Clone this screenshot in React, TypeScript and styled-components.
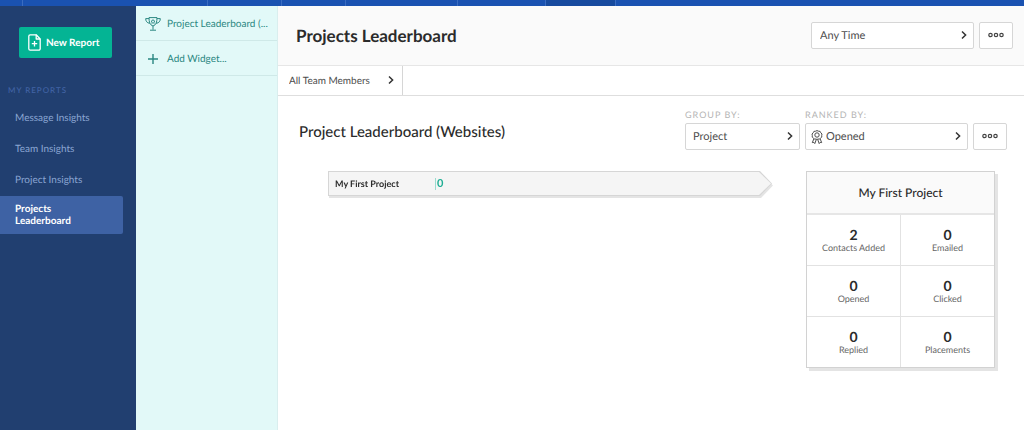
import React from "react";
import styled, { createGlobalStyle } from "styled-components";

const GlobalStyle = createGlobalStyle`
  *, *::before, *::after { box-sizing: border-box; }
  body {
    margin: 0;
    background: #fff;
    color: #2b2b2b;
    font-family: Lato, "Liberation Sans", sans-serif;
    font-size: 12px;
    line-height: 16px;
    text-rendering: geometricPrecision;
  }
  h1, h2, h3, p, ul, dl, dd { margin: 0; padding: 0; }
  ul { list-style: none; }
  button, select { font: inherit; color: inherit; text-rendering: inherit; }
`;

const Page = styled.div`
  display: flex;
  flex-direction: column;
  min-height: 100vh;
`;

const TopBar = styled.div`
  display: flex;
  height: 6px;
  background: #1a52b1;
`;

const TopBarSlot = styled.div<{ $width: number; $active?: boolean }>`
  width: ${(p) => p.$width}px;
  border-right: 1px solid #3a6cc0;
  background: ${(p) => (p.$active ? "#174a9e" : "transparent")};
`;

const Columns = styled.div`
  display: flex;
  flex: 1;
`;

const Sidebar = styled.nav`
  flex: 0 0 136px;
  min-width: 0;
  background: #213f70;
`;

const NewReportButton = styled.button`
  display: flex;
  align-items: center;
  gap: 5px;
  width: 93px;
  height: 31px;
  margin: 21px 0 0 19px;
  padding: 0 0 0 9px;
  border: 0;
  border-radius: 2px;
  background: #04b494;
  color: #fff;
  font-size: 10px;
  font-weight: 700;
  white-space: nowrap;
`;

const SidebarHeading = styled.h2`
  margin: 25px 0 5px 8px;
  color: #4264a6;
  font-size: 8px;
  font-weight: 500;
  letter-spacing: 1px;
  line-height: 14px;
  text-transform: uppercase;
`;

const ReportLink = styled.a<{ $active?: boolean }>`
  display: block;
  margin-right: 13px;
  margin-top: ${(p) => (p.$active ? "1px" : "0")};
  padding: ${(p) => (p.$active ? "7px 40px 7px 15px" : "10px 15px 9px")};
  border-radius: 0 2px 2px 0;
  background: ${(p) => (p.$active ? "#3e62a4" : "transparent")};
  color: ${(p) => (p.$active ? "#fff" : "#8ba6d3")};
  font-size: 10px;
  font-weight: ${(p) => (p.$active ? 700 : 400)};
  line-height: 12px;
  text-decoration: none;
`;

const WidgetPanel = styled.aside`
  flex: 0 0 142px;
  min-width: 0;
  border-right: 1px solid #d9eeee;
  background: #e2f9f8;
`;

const WidgetLink = styled.a`
  display: flex;
  align-items: center;
  gap: 6px;
  height: 35px;
  padding: 1px 0 0 9px;
  border-bottom: 1px solid #cfe9e8;
  color: #2a8781;
  font-size: 10px;
  text-decoration: none;
  white-space: nowrap;

  svg { flex: none; }
`;

const Main = styled.main`
  flex: 1;
  min-width: 0;
`;

const Header = styled.header`
  display: flex;
  align-items: center;
  justify-content: space-between;
  height: 60px;
  padding: 0 11px 0 18px;
  border-bottom: 1px solid #e6e6e6;
  background: #fafafa;
`;

const PageTitle = styled.h1`
  font-size: 17px;
  font-weight: 700;
  line-height: 24px;
`;

const Controls = styled.div`
  display: flex;
  align-items: flex-end;
  gap: 5px;
`;

const Field = styled.div`
  display: flex;
  flex-direction: column;
`;

const FieldLabel = styled.label`
  color: #b4b4b4;
  font-size: 9px;
  letter-spacing: 1px;
  line-height: 16px;
  text-transform: uppercase;
`;

const SelectBox = styled.div<{ $width: number; $plain?: boolean }>`
  display: grid;
  align-items: center;
  width: ${(p) => p.$width}px;
  height: ${(p) => (p.$plain ? 29 : 27)}px;
  padding-right: ${(p) => (p.$plain ? 2 : 0)}px;
  border: solid #d6d6d6;
  border-width: ${(p) => (p.$plain ? "0 1px 0 0" : "1px")};
  border-radius: ${(p) => (p.$plain ? 0 : 2)}px;
  background: #fff;

  > * { grid-area: 1 / 1; }
  > svg { pointer-events: none; }
`;

const Select = styled.select<{ $indent: number; $small?: boolean }>`
  width: 100%;
  height: 100%;
  padding: 0 20px 0 ${(p) => p.$indent}px;
  border: 0;
  background: transparent;
  color: #4d4d4d;
  font-size: ${(p) => (p.$small ? 10 : 11)}px;
  appearance: none;
`;

const Chevron = styled.svg`
  justify-self: end;
  margin: 0 5px 2px 0;
`;

const LeadingIcon = styled.svg`
  margin-left: 5px;
`;

const MoreButton = styled.button`
  display: grid;
  place-items: center;
  width: 34px;
  height: 27px;
  padding: 0 0 2px;
  border: 1px solid #d6d6d6;
  border-radius: 2px;
  background: #fff;
`;

const FilterBar = styled.div`
  height: 30px;
  border-bottom: 1px solid #dedede;
`;

const WidgetHeader = styled.div`
  display: flex;
  align-items: flex-end;
  justify-content: space-between;
  padding: 11px 17px 0 21px;
`;

const WidgetTitle = styled.h2`
  padding-bottom: 8px;
  font-size: 15px;
  font-weight: 500;
  line-height: 20px;
`;

const WidgetBody = styled.div`
  display: flex;
  align-items: flex-start;
  gap: 34px;
  padding: 21px 29px 20px 50px;
`;

const BarShadow = styled.div`
  flex: 1;
  filter: drop-shadow(1px 2px 0 #e4e4e4);
`;

const arrow = `polygon(0 0, calc(100% - 12px) 0, 100% 50%, calc(100% - 12px) 100%, 0 100%)`;

const BarOutline = styled.div`
  padding: 1px;
  background: #d6d6d6;
  clip-path: ${arrow};
`;

const Bar = styled.div`
  display: flex;
  align-items: center;
  height: 23px;
  background: #f5f5f5;
  clip-path: ${arrow};
`;

const BarName = styled.span`
  width: 106px;
  padding-left: 6px;
  font-size: 9px;
  font-weight: 700;
`;

const BarValue = styled.span`
  padding-left: 1px;
  border-left: 1px solid #9adccf;
  color: #1fae94;
  font-size: 11px;
  font-weight: 700;
  line-height: 12px;
`;

const Card = styled.section`
  flex: 0 0 189px;
  border: 1px solid #d2d2d2;
  background: #fff;
  box-shadow: 3px 3px 0 #e4e4e4;
`;

const CardTitle = styled.h3`
  padding: 11px 0 10px;
  border-bottom: 2px solid #e6e6e6;
  background: #fafafa;
  font-size: 12px;
  font-weight: 500;
  line-height: 20px;
  text-align: center;
`;

const Stats = styled.dl`
  display: grid;
  grid-template-columns: 1fr 1fr;
  gap: 1px;
  background: #e2e2e2;
`;

const Stat = styled.div`
  display: flex;
  flex-direction: column-reverse;
  justify-content: center;
  height: 50px;
  padding-top: 1px;
  background: #fff;
  text-align: center;
`;

const StatName = styled.dt`
  color: #666;
  font-size: 9px;
  line-height: 12px;
`;

const StatValue = styled.dd`
  font-size: 14px;
  font-weight: 700;
  line-height: 14px;
`;

const ChevronIcon = () => (
  <Chevron width="8" height="10" viewBox="0 0 8 10" fill="none" stroke="#333" strokeWidth="1.5" aria-hidden="true">
    <path d="M2 1.500 5.600 5 2 8.500" />
  </Chevron>
);

const More = ({ label }: { label: string }) => (
  <MoreButton type="button" aria-label={label}>
    <svg width="16" height="6" viewBox="0 0 16 6" fill="none" stroke="#444" strokeWidth="1.2" aria-hidden="true">
      <circle cx="2.5" cy="3" r="1.7" />
      <circle cx="8" cy="3" r="1.7" />
      <circle cx="13.5" cy="3" r="1.7" />
    </svg>
  </MoreButton>
);

const NewReportIcon = () => (
  <svg width="13" height="17" viewBox="0 0 13 17" fill="none" stroke="#fff" strokeWidth="1.3" strokeLinejoin="round" aria-hidden="true">
    <path d="M2.2.8h6l4 4.2v9.7a1.5 1.5 0 0 1-1.5 1.500H2.200A1.500 1.500 0 0 1 .8 14.700V2.300A1.500 1.500 0 0 1 2.200.8Z" />
    <path d="M8.200.8V5h4M6.500 7v5.400M3.800 9.700h5.400" />
  </svg>
);

const TrophyIcon = () => (
  <svg width="16" height="14" viewBox="0 0 16 14" fill="none" stroke="#2a8781" strokeLinejoin="round" aria-hidden="true">
    <path d="M4 .6h8c0 4.500-.8 7.400-4 8.400C4.800 8 4 5.100 4 .6Z" />
    <path d="M4 1.600H.7c0 2.600 1.200 4.200 4 4.800M12 1.600h3.300c0 2.600-1.200 4.200-4 4.800M8 9v3.700M5 13.200h6" />
    <path d="m8 2.500.6 1.300 1.400.2-1 1 .2 1.400L8 5.700l-1.200.7.200-1.400-1-1 1.400-.2Z" strokeWidth=".8" />
  </svg>
);

const PlusIcon = () => (
  <svg width="16" height="12" viewBox="0 0 16 12" fill="none" stroke="#2a8781" strokeWidth="1.4" aria-hidden="true">
    <path d="M8 1v10M3 6h10" />
  </svg>
);

const RosetteIcon = () => (
  <LeadingIcon width="12" height="14" viewBox="0 0 12 14" fill="none" stroke="#4d4d4d" strokeLinejoin="round" aria-hidden="true">
    <path d="m6 .6 1.500.6 1.600.2.700 1.400 1.200 1.200-.3 1.500.1 1.600-1.300.9-1 1.200L7 9l-1 .5L5 9l-1.500.2-1-1.200-1.300-.9.1-1.600L1 4l1.200-1.200.7-1.400 1.600-.2Z" />
    <circle cx="6" cy="5" r="2.200" />
    <path d="M2.800 9 1.300 12.600l1.600-.2.900 1.200L5.300 9.500M9.200 9l1.500 3.600-1.600-.2-.9 1.200L6.700 9.500" />
  </LeadingIcon>
);

const reports = ["Message Insights", "Team Insights", "Project Insights"];

const stats = [
  { name: "Contacts Added", value: 2 },
  { name: "Emailed", value: 0 },
  { name: "Opened", value: 0 },
  { name: "Clicked", value: 0 },
  { name: "Replied", value: 0 },
  { name: "Placements", value: 0 },
];

export default function App() {
  return (
    <Page>
      <GlobalStyle />
      <TopBar>
        <TopBarSlot $width={23} />
        <TopBarSlot $width={185} />
        <TopBarSlot $width={74} />
        <TopBarSlot $width={64} />
        <TopBarSlot $width={112} />
        <TopBarSlot $width={88} />
        <TopBarSlot $width={70} $active />
      </TopBar>
      <Columns>
        <Sidebar>
          <NewReportButton type="button">
            <NewReportIcon />
            New Report
          </NewReportButton>
          <SidebarHeading>My Reports</SidebarHeading>
          <ul>
            {reports.map((name) => (
              <li key={name}>
                <ReportLink href="#">{name}</ReportLink>
              </li>
            ))}
            <li>
              <ReportLink href="#" $active aria-current="page">
                Projects Leaderboard
              </ReportLink>
            </li>
          </ul>
        </Sidebar>
        <WidgetPanel>
          <WidgetLink href="#">
            <TrophyIcon />
            Project Leaderboard (...
          </WidgetLink>
          <WidgetLink href="#">
            <PlusIcon />
            Add Widget...
          </WidgetLink>
        </WidgetPanel>
        <Main>
          <Header>
            <PageTitle>Projects Leaderboard</PageTitle>
            <Controls>
              <SelectBox $width={163}>
                <Select $indent={8} aria-label="Time range">
                  <option>Any Time</option>
                </Select>
                <ChevronIcon />
              </SelectBox>
              <More label="Report options" />
            </Controls>
          </Header>
          <FilterBar>
            <SelectBox $width={125} $plain>
              <Select $indent={11} $small aria-label="Team members">
                <option>All Team Members</option>
              </Select>
              <ChevronIcon />
            </SelectBox>
          </FilterBar>
          <WidgetHeader>
            <WidgetTitle>Project Leaderboard (Websites)</WidgetTitle>
            <Controls>
              <Field>
                <FieldLabel htmlFor="group-by">Group by:</FieldLabel>
                <SelectBox $width={115}>
                  <Select id="group-by" $indent={7}>
                    <option>Project</option>
                  </Select>
                  <ChevronIcon />
                </SelectBox>
              </Field>
              <Field>
                <FieldLabel htmlFor="ranked-by">Ranked by:</FieldLabel>
                <SelectBox $width={163}>
                  <RosetteIcon />
                  <Select id="ranked-by" $indent={20}>
                    <option>Opened</option>
                  </Select>
                  <ChevronIcon />
                </SelectBox>
              </Field>
              <More label="Widget options" />
            </Controls>
          </WidgetHeader>
          <WidgetBody>
            <BarShadow>
              <BarOutline>
                <Bar>
                  <BarName>My First Project</BarName>
                  <BarValue>0</BarValue>
                </Bar>
              </BarOutline>
            </BarShadow>
            <Card>
              <CardTitle>My First Project</CardTitle>
              <Stats>
                {stats.map((s) => (
                  <Stat key={s.name}>
                    <StatName>{s.name}</StatName>
                    <StatValue>{s.value}</StatValue>
                  </Stat>
                ))}
              </Stats>
            </Card>
          </WidgetBody>
        </Main>
      </Columns>
    </Page>
  );
}
